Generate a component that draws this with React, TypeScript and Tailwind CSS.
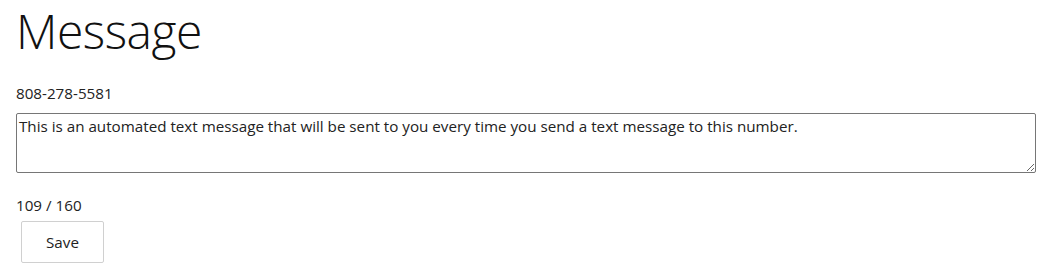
import React from "react";

export default function App() {
  const text =
    "This is an automated text message that will be sent to you every time you send a text message to this number.";
  return (
    <div className="bg-white text-[#212529] px-4 pt-[1px]" style={{ fontFamily: '"Open Sans", "Noto Sans", sans-serif' }}>
      <h1 className="text-[48px] font-light leading-[60px] tracking-[-0.5px] text-[#111]">Message</h1>
      <div className="mt-[21px] text-[15.2px] leading-[22px] text-[#222]">808-278-5581</div>
      <textarea
        className="mt-[9px] block w-[1020px] h-[60px] border border-[#767676] rounded-[2px] px-[2px] py-[1px] text-[15.2px] leading-[22px] text-[#222] resize-y"
        style={{ fontFamily: '"Open Sans", "Noto Sans", sans-serif' }}
        defaultValue={text}
      />
      <div className="mt-[21px] text-[15.2px] leading-[22px] text-[#222]">109 / 160</div>
      <button className="mt-[5px] ml-[5px] w-[83px] h-[42px] border border-[#d0d0d0] rounded-[2px] bg-white text-[15.2px] text-[#222]">
        Save
      </button>
    </div>
  );
}
